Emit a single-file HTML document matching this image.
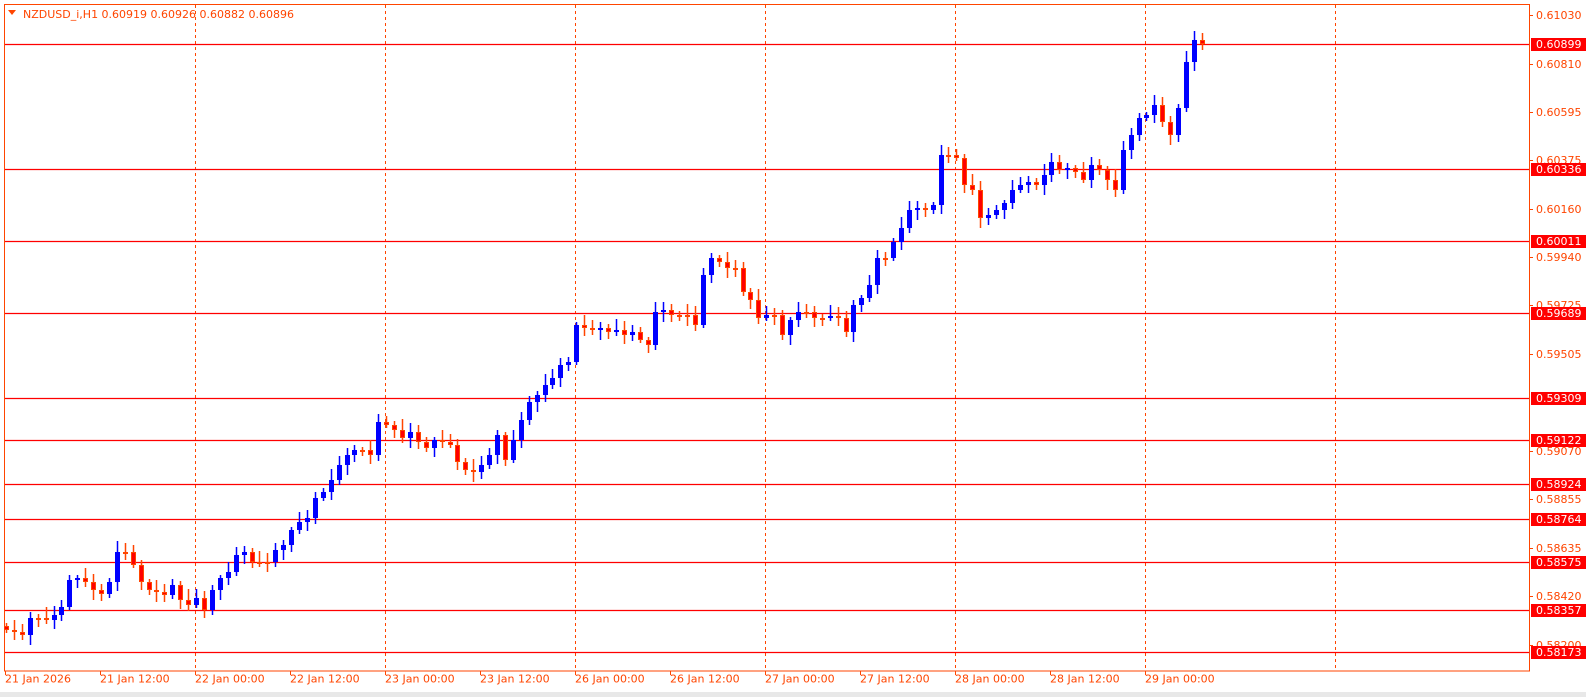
<!DOCTYPE html>
<html><head><meta charset="utf-8"><style>
html,body{margin:0;padding:0;background:#fff;width:1586px;height:697px;overflow:hidden}
svg{display:block}
text{font-family:"DejaVu Sans","Liberation Sans",sans-serif;font-size:11px}
</style></head><body>
<svg id="s" width="1586" height="697" xmlns="http://www.w3.org/2000/svg">
<rect x="0" y="0" width="1586" height="697" fill="#fff"/>
<rect x="0" y="692" width="1586" height="5" fill="#e8e8e8"/>
<g id="g"></g>
</svg>
<script>
var g=document.getElementById('g'),h='';
var R='#ff4500';
// vertical dashed
[195,385,575,765,955,1145,1335].forEach(function(x){h+='<line x1="'+(x+.5)+'" y1="5" x2="'+(x+.5)+'" y2="671" stroke="'+R+'" stroke-dasharray="3,3"/>';});
// horizontal levels
var lv=[[44,'0.60899'],[169,'0.60336'],[241,'0.60011'],[313,'0.59689'],[398,'0.59309'],[440,'0.59122'],[484,'0.58924'],[519,'0.58764'],[562,'0.58575'],[610,'0.58357'],[652,'0.58173']];
lv.forEach(function(l){h+='<line x1="4" y1="'+(l[0]+.5)+'" x2="1529" y2="'+(l[0]+.5)+'" stroke="#f00" stroke-width="1.2"/>';});
// candles
var c=[630,632,635,618,618,620,615,607,580,578,582,590,594,582,552,552,565,582,590,592,595,585,600,605,598,610,590,578,572,555,552,562,562,562,550,545,530,522,518,498,492,480,465,455,450,450,455,422,425,430,438,432,442,448,440,442,445,462,470,472,465,455,435,460,440,420,402,395,385,378,365,362,325,328,330,328,332,330,335,332,340,345,312,310,315,315,315,325,275,258,262,268,268,292,300,318,315,315,335,320,312,312,318,318,316,318,332,305,298,285,258,258,242,228,210,208,210,205,155,155,158,185,190,218,215,210,203,190,185,182,185,175,162,170,168,172,180,165,170,180,190,150,135,118,115,105,122,135,108,62,40,44];
var prev=628;
for(var i=0;i<c.length;i++){
 var x=Math.round(6+i*7.92),o=prev,cl=c[i];
 if(i==0)o=626;
 var up=cl<o;var t=Math.min(o,cl),b=Math.max(o,cl);if(b-t<2){b=t+2;}
 var wt=t-(3+(i*7)%9),wb=b+(3+(i*5)%8);
 var col=up?'#0000ff':R;
 h+='<line x1="'+(x+.5)+'" y1="'+wt+'" x2="'+(x+.5)+'" y2="'+wb+'" stroke="'+col+'" stroke-width="1.5"/>';
 if(up)h+='<rect x="'+(x-2)+'" y="'+t+'" width="5" height="'+(b-t)+'" fill="#0000ff"/>';
 else h+='<rect x="'+(x-1.5)+'" y="'+(t+.5)+'" width="4" height="'+(b-t-1)+'" fill="#f00" stroke="'+R+'"/>';
 prev=cl;
}
// border
h+='<rect x="4.5" y="4.5" width="1525" height="666.5" fill="none" stroke="'+R+'"/>';
// price labels
var pl=[[15,'0.61030'],[64,'0.60810'],[112,'0.60595'],[160,'0.60375'],[209,'0.60160'],[257,'0.59940'],[305,'0.59725'],[354,'0.59505'],[451,'0.59070'],[499,'0.58855'],[548,'0.58635'],[596,'0.58420'],[645,'0.58200']];
pl.forEach(function(p){h+='<line x1="1530" y1="'+(p[0]+.5)+'" x2="1533" y2="'+(p[0]+.5)+'" stroke="'+R+'"/><text x="1536" y="'+(p[0]+4)+'" fill="'+R+'">'+p[1]+'</text>';});
lv.forEach(function(l){h+='<rect x="1531" y="'+(l[0]-6)+'" width="55" height="13" fill="#f00"/><text x="1536" y="'+(l[0]+4)+'" fill="#fff">'+l[1]+'</text>';});
// date labels
var d=['21 Jan 2026','21 Jan 12:00','22 Jan 00:00','22 Jan 12:00','23 Jan 00:00','23 Jan 12:00','26 Jan 00:00','26 Jan 12:00','27 Jan 00:00','27 Jan 12:00','28 Jan 00:00','28 Jan 12:00','29 Jan 00:00'];
d.forEach(function(s,k){var x=5+k*95;h+='<line x1="'+(x+.5)+'" y1="671" x2="'+(x+.5)+'" y2="675" stroke="'+R+'"/><text x="'+x+'" y="679" dy="0.3em" fill="'+R+'">'+s+'</text>';});
// header
h+='<path d="M8 10 L16 10 L12 15 Z" fill="'+R+'"/><text x="23" y="18" fill="'+R+'">NZDUSD_i,H1  0.60919 0.60926 0.60882 0.60896</text>';
g.innerHTML=h;
</script>
</body></html>
